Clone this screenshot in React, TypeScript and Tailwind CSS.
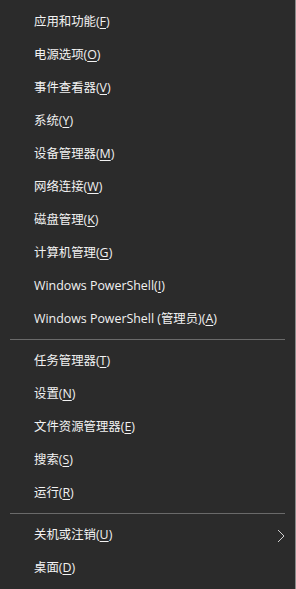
import React from "react";

type Item = { label: string; key: string; suffix?: string; arrow?: boolean };

const groups: Item[][] = [
  [
    { label: "应用和功能", key: "F" },
    { label: "电源选项", key: "O" },
    { label: "事件查看器", key: "V" },
    { label: "系统", key: "Y" },
    { label: "设备管理器", key: "M" },
    { label: "网络连接", key: "W" },
    { label: "磁盘管理", key: "K" },
    { label: "计算机管理", key: "G" },
    { label: "Windows PowerShell", key: "I" },
    { label: "Windows PowerShell (管理员)", key: "A" },
  ],
  [
    { label: "任务管理器", key: "T" },
    { label: "设置", key: "N" },
    { label: "文件资源管理器", key: "E" },
    { label: "搜索", key: "S" },
    { label: "运行", key: "R" },
  ],
  [
    { label: "关机或注销", key: "U", arrow: true },
    { label: "桌面", key: "D" },
  ],
];

function Row({ item }: { item: Item }) {
  return (
    <div className="h-[33px] flex items-center pt-[2px] pl-[34px] pr-[10px] justify-between">
      <span className="text-[12.4px] text-[#f2f2f2] leading-none whitespace-nowrap">
        {item.label}(<span className="underline underline-offset-[2px]">{item.key}</span>)
      </span>
      {item.arrow && (
        <svg width="8" height="14" viewBox="0 0 8 14">
          <path d="M1 1 L7 7 L1 13" fill="none" stroke="#cfcfcf" strokeWidth="1" />
        </svg>
      )}
    </div>
  );
}

export default function App() {
  return (
    <div
      className="w-[296px] h-[589px] bg-[#2b2b2b] border-r border-[#8a8a8a] pt-[5px] overflow-hidden"
      style={{ fontFamily: '"Segoe UI", "Open Sans", "Noto Sans CJK SC", sans-serif' }}
    >
      {groups.map((g, gi) => (
        <div key={gi}>
          {gi > 0 && (
            <div className="h-[9px] flex items-center pl-[10px] pr-[10px]">
              <div className="h-px w-full bg-[#6a6a6a]" />
            </div>
          )}
          {g.map((it) => (
            <Row key={it.key} item={it} />
          ))}
        </div>
      ))}
    </div>
  );
}
